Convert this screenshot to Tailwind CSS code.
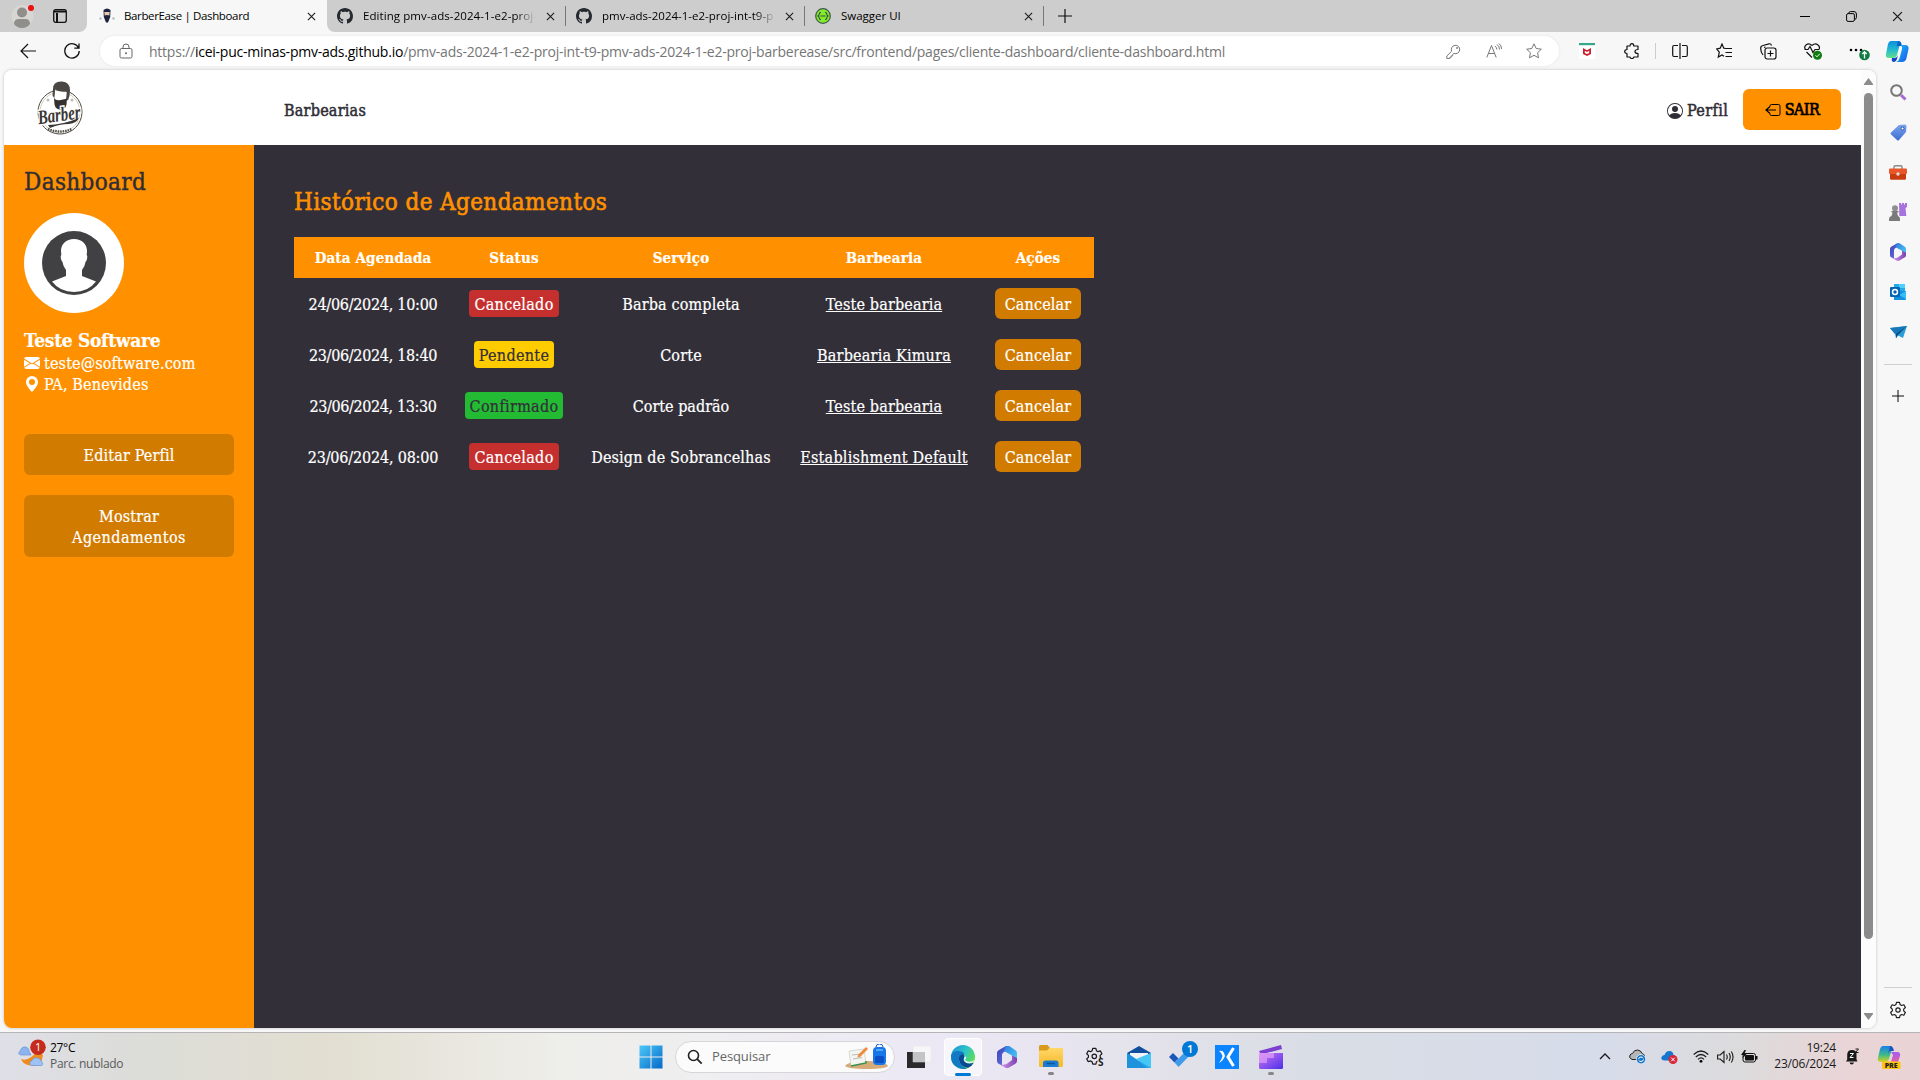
<!DOCTYPE html>
<html lang="pt-BR">
<head>
<meta charset="utf-8">
<title>BarberEase | Dashboard</title>
<script src="https://cdn.jsdelivr.net/npm/@tailwindcss/browser@4"></script>
</head>
<body class="w-[1920px] h-[1080px] overflow-hidden bg-[#f7f7f7] text-black font-['Open_Sans','Noto_Sans',sans-serif]">

<svg class="absolute size-0">
  <defs>
    <linearGradient id="gBlue" x1="0" y1="0" x2="1" y2="1"><stop offset="0" stop-color="#4cc8f8"/><stop offset="1" stop-color="#0569c8"/></linearGradient>
    <linearGradient id="gM1" x1="0" y1="0" x2="1" y2="1"><stop offset="0" stop-color="#3a3fb8"/><stop offset="1" stop-color="#6f7de8"/></linearGradient>
    <linearGradient id="gM2" x1="0" y1="0" x2="1" y2="1"><stop offset="0" stop-color="#2c7de0"/><stop offset="1" stop-color="#4fd0f5"/></linearGradient>
    <linearGradient id="gM3" x1="0" y1="0" x2="1" y2="0"><stop offset="0" stop-color="#d59af0"/><stop offset="1" stop-color="#7a3fb0"/></linearGradient>
    <linearGradient id="gEdge" x1="0" y1="0" x2="1" y2=".6"><stop offset="0" stop-color="#1b8fd8"/><stop offset=".55" stop-color="#2fc3c9"/><stop offset="1" stop-color="#5fe04a"/></linearGradient>
    <linearGradient id="gCopA" x1="0" y1="0" x2="0" y2="1"><stop offset="0" stop-color="#0a8fe0"/><stop offset=".5" stop-color="#22b8d0"/><stop offset="1" stop-color="#62e08c"/></linearGradient>
    <linearGradient id="gCopB" x1="0" y1="0" x2="1" y2="1"><stop offset="0" stop-color="#1bc0f5"/><stop offset="1" stop-color="#1557e8"/></linearGradient>
    <linearGradient id="gPreA" x1="0" y1="0" x2="0" y2="1"><stop offset="0" stop-color="#1a7fe8"/><stop offset=".55" stop-color="#3cba8a"/><stop offset="1" stop-color="#d8d020"/></linearGradient>
    <linearGradient id="gPreB" x1="0" y1="0" x2="0" y2="1"><stop offset="0" stop-color="#a45cf0"/><stop offset="1" stop-color="#f5628c"/></linearGradient>
    <linearGradient id="gClip" x1="0" y1="0" x2="1" y2="1"><stop offset="0" stop-color="#d07af5"/><stop offset="1" stop-color="#4a2fe8"/></linearGradient>
    <linearGradient id="gFold" x1="0" y1="0" x2="0" y2="1"><stop offset="0" stop-color="#ffd868"/><stop offset="1" stop-color="#f5b82a"/></linearGradient>
    <linearGradient id="gTag" x1="0" y1="0" x2="0" y2="1"><stop offset="0" stop-color="#7aa4ee"/><stop offset="1" stop-color="#3f6fd0"/></linearGradient>
  </defs>
  <symbol id="github" viewBox="0 0 16 16"><path fill="#24292f" d="M8 0C3.58 0 0 3.58 0 8c0 3.54 2.29 6.53 5.47 7.59.4.07.55-.17.55-.38 0-.19-.01-.82-.01-1.49-2.01.37-2.53-.49-2.69-.94-.09-.23-.48-.94-.82-1.13-.28-.15-.68-.52-.01-.53.63-.01 1.08.58 1.23.82.72 1.21 1.87.87 2.33.66.07-.52.28-.87.51-1.07-1.78-.2-3.64-.89-3.64-3.95 0-.87.31-1.59.82-2.15-.08-.2-.36-1.02.08-2.12 0 0 .67-.21 2.2.82.64-.18 1.32-.27 2-.27s1.36.09 2 .27c1.53-1.04 2.2-.82 2.2-.82.44 1.1.16 1.92.08 2.12.51.56.82 1.27.82 2.15 0 3.07-1.87 3.75-3.65 3.95.29.25.54.73.54 1.48 0 1.07-.01 1.93-.01 2.2 0 .21.15.46.55.38A8.01 8.01 0 0 0 16 8c0-4.42-3.58-8-8-8"/></symbol>
  <symbol id="close" viewBox="0 0 10 10"><path d="M1 1l8 8M9 1l-8 8" stroke="#1a1a1a" stroke-width="1.2" fill="none"/></symbol>
  <symbol id="plus" viewBox="0 0 14 14"><path d="M7 0v14M0 7h14" stroke="#111" stroke-width="1.2"/></symbol>
  <symbol id="m365" viewBox="0 0 20 22"><path d="M9 0L2 4Q0 5.200 0 7v8q0 2 2 3l3 1.500V9q0-2 2-3l5-3Q12 0 9 0z" fill="url(#gM1)"/><path d="M9 0q2-.6 4 .6l5 3.400q2 1.200 2 3v8l-5-3V9.500L7 5z" fill="url(#gM2)"/><path d="M20 12v3q0 2-2 3l-6 3.500q-2 1-4 0l-5-3q6 1 8-1.500l4-3V9.500z" fill="url(#gM3)"/></symbol>
  <symbol id="gear" viewBox="0 0 20 20"><path d="M8.300 1.500h3.400l.6 2.500 1.700 1 2.500-.8 1.700 3-1.900 1.800v2l1.900 1.800-1.700 3-2.500-.8-1.700 1-.6 2.500H8.300l-.6-2.500-1.700-1-2.500.8-1.700-3L3.700 11V9L1.800 7.200l1.700-3L6 5l1.700-1z" fill="none" stroke="#1c1c1c" stroke-width="1.300" stroke-linejoin="round"/><circle cx="10" cy="10" r="2.400" fill="none" stroke="#1c1c1c" stroke-width="1.300"/></symbol>
  <symbol id="copilot" viewBox="0 0 24 22"><path d="M6 1h7q3 0 2 3l-3 11q-.8 3-4 3H4q-4 0-3-4L3 4q.8-3 3-3z" fill="url(#gCopA)"/><path d="M13 1q3 0 3.500 3L17 6h-5l-1 3z" fill="#0b62c4"/><path d="M16 5h4q4 0 3.500 4l-2 9q-.8 4-4.500 4h-6q3-1 3.600-4L17 9q.5-2-1-4z" fill="url(#gCopB)"/><path d="M7 18h3q2 0 3-3l-1 4q-1 3-3 3-3 0-2-4z" fill="#1442c8"/></symbol>
</svg>

<!-- Tab strip -->
<div class="flex h-8 w-full bg-[#f7f7f7] text-[11.5px]">
  <div class="flex h-8 w-[87px] items-center rounded-br-lg bg-[#cdcdcd]">
    <svg class="ml-[10px] size-[26px]" viewBox="0 0 26 26"><circle cx="12.500" cy="13" r="11" fill="#d8d6d2"/><circle cx="12" cy="9.500" r="5" fill="#908e8a"/><path d="M4 21q0-5 5-5h6q5 0 5 5-3 4-8 4t-8-4z" fill="#908e8a"/><circle cx="21" cy="5" r="3" fill="#e81010"/></svg>
    <svg class="ml-[17px] size-[14px]" viewBox="0 0 14 14"><rect x=".7" y=".7" width="12.600" height="12.600" rx="2" fill="none" stroke="#111" stroke-width="1.300"/><path d="M1 2.500h12M4 4v9" stroke="#111" stroke-width="2"/></svg>
  </div>
  <div class="flex h-8 w-[240px] items-center rounded-t-lg bg-[#f7f7f7]">
    <svg class="ml-3 size-4" viewBox="0 0 16 16"><path d="M4.500 2q3.500-3 7 0l-.3 7L9 14.500H7L4.800 9z" fill="#1e2440"/><path d="M5.300 4h5.400l-.4 3.500q-2.300-1-4.600 0z" fill="#e8c8b0"/><circle cx="1.500" cy="10.500" r="1.200" fill="#bbb"/><circle cx="14.500" cy="10.500" r="1.200" fill="#bbb"/></svg>
    <span class="ml-[9px] w-[183px] whitespace-nowrap tracking-[-0.36px]">BarberEase | Dashboard</span>
    <svg class="size-[9px]"><use href="#close"/></svg>
  </div>
  <div class="flex h-8 flex-1 items-center rounded-bl-lg bg-[#cdcdcd]">
    <svg class="ml-[10px] size-4"><use href="#github"/></svg>
    <span class="ml-[10px] w-[173px] overflow-hidden whitespace-nowrap tracking-[0.08px] [mask-image:linear-gradient(to_right,black_88%,transparent)]">Editing pmv-ads-2024-1-e2-proj-</span>
    <svg class="ml-[10px] size-[9px]"><use href="#close"/></svg>
    <div class="ml-[10px] h-5 w-px bg-[#777]"></div>
    <svg class="ml-[10px] size-4"><use href="#github"/></svg>
    <span class="ml-[10px] w-[174px] overflow-hidden whitespace-nowrap [mask-image:linear-gradient(to_right,black_88%,transparent)]">pmv-ads-2024-1-e2-proj-int-t9-p</span>
    <svg class="ml-[9px] size-[9px]"><use href="#close"/></svg>
    <div class="ml-[10px] h-5 w-px bg-[#777]"></div>
    <svg class="ml-[10px] size-4" viewBox="0 0 16 16"><circle cx="8" cy="8" r="7.300" fill="#85ea2d" stroke="#3c5a4a" stroke-width="1.200"/><path d="M6 4.500q-1.800 0-1.800 1.500t-1.200 2q1.200.5 1.200 2T6 11.500M10 4.500q1.800 0 1.800 1.500T13 8q-1.200.5-1.200 2t-1.800 1.500M5.500 8h5" fill="none" stroke="#2f4a3a" stroke-width="1.100"/></svg>
    <span class="ml-[10px] w-[183px] whitespace-nowrap">Swagger UI</span>
    <svg class="size-[9px]"><use href="#close"/></svg>
    <div class="ml-[10px] h-5 w-px bg-[#777]"></div>
    <svg class="ml-[14px] size-[14px]"><use href="#plus"/></svg>
    <div class="ml-auto flex items-center">
      <div class="flex w-[46px] justify-center"><div class="h-px w-[10px] bg-black"></div></div>
      <div class="flex w-[46px] justify-center"><svg class="size-[11px]" viewBox="0 0 11 11"><rect x=".6" y="2.600" width="7.800" height="7.800" rx="1.500" fill="none" stroke="#000"/><path d="M2.800 2.300V2Q3 .6 4.500.6H8q2.400 0 2.400 2.400v3.500Q10.400 8 9 8.300" fill="none" stroke="#000"/></svg></div>
      <div class="flex w-[46px] justify-center"><svg class="size-[11px]"><use href="#close"/></svg></div>
    </div>
  </div>
</div>

<!-- Address bar and browser tools -->
<div class="flex h-[38px] w-full items-center">
  <svg class="ml-5 size-4" viewBox="0 0 16 16"><path d="M16 8H1M8 1L1 8l7 7" fill="none" stroke="#111" stroke-width="1.200"/></svg>
  <svg class="ml-7 size-4" viewBox="0 0 16 16"><path d="M14.600 5A7.200 7.200 0 1 0 15.200 8M15 .5V5.200h-4.700" fill="none" stroke="#111" stroke-width="1.300"/></svg>
  <div class="ml-5 flex h-[30px] w-[1459px] items-center rounded-full bg-white shadow-[0_0_3px_#e4e4e4]">
    <svg class="ml-[19px] h-4 w-[14px]" viewBox="0 0 14 16"><rect x="1" y="5.500" width="12" height="9.500" rx="1.500" fill="none" stroke="#666"/><path d="M4 5.500V4q0-3 3-3t3 3v1.500" fill="none" stroke="#666"/><circle cx="7" cy="10.300" r="1" fill="#666"/></svg>
    <p class="ml-4 w-[1297px] whitespace-nowrap text-[14px] tracking-[-0.235px] text-[#767676]">https://<span class="text-black">icei-puc-minas-pmv-ads.github.io</span>/pmv-ads-2024-1-e2-proj-int-t9-pmv-ads-2024-1-e2-proj-barberease/src/frontend/pages/cliente-dashboard/cliente-dashboard.html</p>
    <svg class="size-[15px]" viewBox="0 0 15 15"><path d="M5.700 7.200A4.200 4.200 0 1 1 8 9.400L6.700 10.500v1.300H5.300v1.300H4v1.300H.8V12z" fill="none" stroke="#777"/><circle cx="11" cy="4" r=".9" fill="#777"/></svg>
    <svg class="ml-[25px] size-4" viewBox="0 0 16 16"><path d="M.8 14.500L5.500 2.500l4.700 12M2.500 10.500h6M9 3q1.800 1.300 1.800 3.500M11 1.500q2.500 1.800 2.500 5M13 .5q2.600 2 2.600 5.500" fill="none" stroke="#777"/></svg>
    <svg class="ml-6 size-4" viewBox="0 0 16 16"><path d="M8 .8l2.200 4.700 5.100.7-3.700 3.500.9 5.100L8 12.300l-4.500 2.500.9-5.100L.7 6.200l5.100-.7z" fill="none" stroke="#777"/></svg>
  </div>
  <div class="ml-[5px] flex items-center">
    <div class="flex w-[46px] justify-center"><svg class="h-4 w-4" viewBox="0 0 16 16"><path fill="#fff" d="M0 0h16v16H0z"/><path fill="#36a88a" d="M0 0h16v2.200H0z"/><path d="M4 5l4 2.200L12 5v6l-4 2-4-2zM5.800 7.700v2.200L8 11l2.200-1.100V7.700L8 9z" fill="#c8202c" fill-rule="evenodd"/></svg></div>
    <div class="flex w-[43px] justify-center"><svg class="size-4" viewBox="0 0 16 16"><path d="M3 3h3q0-2.300 1.900-2.300T9.800 3H14v3.500q-3 0-3 2t3 2V14H9.800q0 1.500-1.900 1.500T6 14H3v-3.500Q.7 10.300.7 8.500T3 6.500z" fill="none" stroke="#111" stroke-width="1.200" stroke-linejoin="round"/></svg></div>
    <div class="ml-[2px] h-4 w-px bg-[#ccc]"></div>
    <div class="ml-[2px] flex w-[44px] justify-center"><svg class="size-4" viewBox="0 0 16 16"><path d="M6 2.500H2Q.7 2.500.7 4v8q0 1.500 1.300 1.500h4M10 2.500h4q1.300 0 1.300 1.500v8q0 1.500-1.300 1.500h-4M8 0v16" fill="none" stroke="#111" stroke-width="1.200"/></svg></div>
    <div class="flex w-[44px] justify-center"><svg class="size-4" viewBox="0 0 16 16"><path d="M9.500 5.500L7.800 5.200 6 1 4.200 5.200.7 6l2.600 3.200L2.300 14 6 12l2 1.200M9.500 5.500h6.500M9.500 9.500H16M9.500 13.500H16" fill="none" stroke="#111" stroke-width="1.200"/></svg></div>
    <div class="flex w-[44px] justify-center"><svg class="size-[17px]" viewBox="0 0 17 17"><path d="M3 12Q.7 9 .7 5.500.5 3 3 2.500L9 .8Q11 .5 11.500 2.500M4 4.500L5.500 4" fill="none" stroke="#111" stroke-width="1.200"/><rect x="5" y="5" width="11" height="11" rx="2.200" fill="none" stroke="#111" stroke-width="1.200"/><path d="M10.500 7.500v6M7.500 10.500h6" stroke="#111" stroke-width="1.200"/></svg></div>
    <div class="flex w-[45px] justify-center"><svg class="h-[17px] w-[18px]" viewBox="0 0 18 17"><path d="M8 2.500Q5-.2 2.300 1.700T1.500 6.500M8 2.500q3-2.700 5.700-.8T15 6.500M.5 6.500H4l2-3 3 6 2-3h4M2.500 9L8 14.500" fill="none" stroke="#111" stroke-width="1.200"/><circle cx="13.500" cy="12.200" r="4.500" fill="#107c10"/><path d="M11.500 12.300l1.500 1.500 2.700-3" stroke="#fff" fill="none"/></svg></div>
    <div class="flex w-[45px] justify-center"><svg class="ml-[4px] h-5 w-[22px]" viewBox="0 0 22 20"><circle cx="2" cy="9" r="1.300"/><circle cx="7" cy="9" r="1.300"/><circle cx="12" cy="9" r="1.300"/><circle cx="15.500" cy="14" r="5.300" fill="#107c41"/><path d="M15.500 17.500v-6M13.300 13l2.200-2.300 2.200 2.300" stroke="#fff" stroke-width="1.300" fill="none"/></svg></div>
    <svg class="ml-[5px] h-[22px] w-6"><use href="#copilot"/></svg>
  </div>
</div>

<!-- Page area and browser sidebar -->
<div class="flex h-[962px] w-full pl-1">
  <div class="flex h-[958px] w-[1872px] overflow-hidden rounded-lg bg-white shadow-[0_0_3px_#bbb] font-['Roboto_Slab','DejaVu_Serif_Condensed','DejaVu_Serif',serif] text-base tracking-[0.15px] [-webkit-text-stroke:0.2px]">
    <div class="w-[1857px]">
      <header class="flex h-[75px] items-center bg-white text-[#2f2d36]">
        <svg class="ml-[28px] h-[56px] w-[60px] overflow-visible" viewBox="-2 0 60 56"><circle cx="26" cy="32" r="22" fill="#fff" stroke="#4a4843" stroke-width="1"/><circle cx="26" cy="32" r="20" fill="none" stroke="#c9c2a6" stroke-width=".8"/><path d="M19 9q0-8 9-7.500 8 .5 8 9 0 5-2 10l-2-1 .5-8q-6 1-11-2l-1 9-2-3z" fill="#4a4744"/><path d="M21 10q6 3 11.500 2L32 20H20.500z" fill="#fff"/><path d="M20 18q2 3 6.500 2t6.500-1.500l-.5 6q-1 5-6 5t-6-5z" fill="#34312e"/><circle cx="14" cy="20" r="1.500" fill="#bbb"/><circle cx="38" cy="20" r="1.500" fill="#bbb"/><g class="[-webkit-text-stroke:0]"><text x="4" y="41" transform="rotate(-8 27 38)" textLength="43" lengthAdjust="spacingAndGlyphs" font-family="Liberation Serif" font-style="italic" font-weight="700" font-size="20" letter-spacing="0" fill="none" stroke="#fff" stroke-width="3" aria-hidden="true">Barber</text></g><text x="4" y="41" transform="rotate(-8 27 38)" textLength="43" lengthAdjust="spacingAndGlyphs" font-family="Liberation Serif" font-style="italic" font-weight="700" font-size="20" letter-spacing="0" fill="#393633">Barber</text><path d="M14 45q14 0 31-7-2 5-10 6-10 0-19 4z" fill="#393633"/><path d="M14 49q12 5 24 0" fill="none" stroke="#55524c" stroke-width="2.500" stroke-dasharray="1.500 1"/></svg>
        <a class="ml-[192px] mt-[7px] tracking-[0.22px] [-webkit-text-stroke:0.5px]">Barbearias</a>
        <a class="ml-auto mt-[6px] flex items-center gap-1">
          <svg class="size-4" viewBox="0 0 16 16" fill="currentColor"><path d="M11 6a3 3 0 1 1-6 0 3 3 0 0 1 6 0"/><path fill-rule="evenodd" d="M0 8a8 8 0 1 1 16 0A8 8 0 0 1 0 8m8-7a7 7 0 0 0-5.468 11.370C3.242 11.226 4.805 10 8 10s4.757 1.225 5.468 2.370A7 7 0 0 0 8 1"/></svg>
          <span class="w-[42px] tracking-[0.4px] [-webkit-text-stroke:0.5px]">Perfil</span>
        </a>
        <a class="ml-[14px] mr-5 mt-[3px] flex h-[41px] w-[98px] items-center justify-center gap-1 rounded-md bg-[#ff9100] pt-px text-black">
          <svg class="size-4" viewBox="0 0 16 16" fill="none" stroke="currentColor"><path d="M5 4.500V4q0-1.500 1.500-1.500h7Q15 2.500 15 4v8q0 1.500-1.500 1.500h-7Q5 13.500 5 12v-.5"/><path d="M11 8H1M5 4.500L1 8l4 3.500" stroke-width="1.200"/></svg>
          <span class="tracking-[-0.55px] [-webkit-text-stroke:0.7px]">SAIR</span>
        </a>
      </header>
      <div class="flex h-[883px]">
        <aside class="w-[250px] bg-[#ff9100] px-5 pt-[19px] text-white">
          <h2 class="h-[36px] text-[24px] leading-[36px] tracking-[0.35px] text-[#2f2d36] [-webkit-text-stroke:0.4px]">Dashboard</h2>
          <svg class="mt-[13px] size-[100px]" viewBox="0 0 100 100"><circle cx="50" cy="50" r="50" fill="#fff"/><circle cx="50" cy="50" r="32" fill="#414042"/><path d="M50 26c8 0 13 5 13 12l-.3 4q1 1 .3 4-.5 2-1.300 2.500Q61 53 58 57v6l14 5.500Q64 79 50 79T28 68.500L42 63v-6q-3-4-3.700-8.500Q37.500 48 37 46q-.7-3 .3-4L37 38c0-7 5-12 13-12z" fill="#fff"/></svg>
          <p class="mt-[13px] h-[28px] whitespace-nowrap text-[19px] font-bold leading-[28px] tracking-[-0.3px]">Teste Software</p>
          <p class="mt-[-2px] flex h-[21px] items-center gap-1"><svg class="size-4" viewBox="0 0 16 16" fill="currentColor"><path d="M.05 3.555A2 2 0 0 1 2 2h12a2 2 0 0 1 1.950 1.555L8 8.414zM0 4.697v7.104l5.803-3.558zM6.761 8.830l-6.570 4.027A2 2 0 0 0 2 14h12a2 2 0 0 0 1.808-1.144l-6.570-4.027L8 9.586zm3.436-.586L16 11.801V4.697z"/></svg><span class="pt-[2px]">teste@software.com</span></p>
          <p class="flex h-[21px] items-center gap-1"><svg class="size-4" viewBox="0 0 16 16" fill="currentColor"><path d="M8 16s6-5.686 6-10A6 6 0 0 0 2 6c0 4.314 6 10 6 10m0-7a3 3 0 1 1 0-6 3 3 0 0 1 0 6"/></svg><span class="pt-[2px]">PA, Benevides</span></p>
          <a class="mt-[40px] flex h-[41px] items-center justify-center rounded-md bg-[#d17b00] pt-[2px]">Editar Perfil</a>
          <a class="mt-[20px] flex h-[62px] flex-col items-center justify-center rounded-md bg-[#d17b00] pt-[2px] text-center leading-[21px]"><span>Mostrar</span><span class="tracking-[0.45px]">Agendamentos</span></a>
        </aside>
        <main class="w-[1607px] bg-[#322f38] pl-10 pt-[38px] text-white">
          <h1 class="h-[37px] whitespace-nowrap text-[24px] leading-[38px] tracking-[0.38px] text-[#ff9100] [-webkit-text-stroke:0.6px]">Histórico de Agendamentos</h1>
          <table class="mt-[17px] w-[800px] table-fixed text-center">
            <colgroup><col class="w-[158px]"><col class="w-[124px]"><col class="w-[210px]"><col class="w-[196px]"><col class="w-[112px]"></colgroup>
            <thead><tr class="h-[41px] bg-[#ff9100] text-[15px] font-bold [&>th]:pt-[2px]"><th>Data Agendada</th><th>Status</th><th>Serviço</th><th>Barbearia</th><th>Ações</th></tr></thead>
            <tbody class="[&_td:nth-child(1)]:pt-[2px] [&_td:nth-child(3)]:pt-[2px] [&_td:nth-child(4)]:pt-[2px]">
              <tr class="h-[51px]"><td class="tracking-[-0.28px]">24/06/2024, 10:00</td><td><span class="inline-block h-[27px] rounded bg-[#c5302f] px-[5px] align-middle leading-[29px] tracking-[0.3px]">Cancelado</span></td><td>Barba completa</td><td><a class="underline">Teste barbearia</a></td><td><span class="inline-block h-[31px] w-[86px] rounded-md bg-[#d17b00] align-middle leading-[33px]">Cancelar</span></td></tr>
              <tr class="h-[51px]"><td class="tracking-[-0.32px]">23/06/2024, 18:40</td><td><span class="inline-block h-[27px] rounded bg-[#ffcc00] px-[5px] align-middle leading-[29px] tracking-[0.3px] text-[#322f38]">Pendente</span></td><td>Corte</td><td><a class="underline tracking-[0.2px]">Barbearia Kimura</a></td><td><span class="inline-block h-[31px] w-[86px] rounded-md bg-[#d17b00] align-middle leading-[33px]">Cancelar</span></td></tr>
              <tr class="h-[51px]"><td class="tracking-[-0.38px]">23/06/2024, 13:30</td><td><span class="inline-block h-[27px] rounded bg-[#22bb33] px-[5px] align-middle leading-[29px] tracking-[0.3px] text-[#322f38]">Confirmado</span></td><td class="tracking-normal">Corte padrão</td><td><a class="underline">Teste barbearia</a></td><td><span class="inline-block h-[31px] w-[86px] rounded-md bg-[#d17b00] align-middle leading-[33px]">Cancelar</span></td></tr>
              <tr class="h-[51px]"><td class="tracking-[-0.18px]">23/06/2024, 08:00</td><td><span class="inline-block h-[27px] rounded bg-[#c5302f] px-[5px] align-middle leading-[29px] tracking-[0.3px]">Cancelado</span></td><td>Design de Sobrancelhas</td><td><a class="underline tracking-[0.23px]">Establishment Default</a></td><td><span class="inline-block h-[31px] w-[86px] rounded-md bg-[#d17b00] align-middle leading-[33px]">Cancelar</span></td></tr>
            </tbody>
          </table>
        </main>
      </div>
    </div>
    <!-- Scrollbar -->
    <div class="flex w-[15px] flex-col items-center bg-[#fcfcfc] pt-2">
      <svg class="h-[7px] w-[9px]" viewBox="0 0 9 7"><path d="M4.500 0L9 6v1H0V6z" fill="#8b8b8b"/></svg>
      <div class="mt-2 h-[846px] w-[9px] rounded-full bg-[#8b8b8b]"></div>
      <svg class="mt-[74px] h-[7px] w-[9px]" viewBox="0 0 9 7"><path d="M4.500 7L9 1V0H0v1z" fill="#8b8b8b"/></svg>
    </div>
  </div>

  <div class="flex w-[44px] flex-col items-center pt-[2px]">
    <div class="flex h-10 items-center"><svg class="size-[17px]" viewBox="0 0 17 17"><path d="M11 11l4.500 4.500" stroke="#a868d8" stroke-width="3"/><circle cx="6.500" cy="6.500" r="5.300" fill="none" stroke="#767676" stroke-width="2"/></svg></div>
    <div class="flex h-10 items-center"><svg class="size-[17px]" viewBox="0 0 17 17"><path d="M9 1l6-.5q1.500 0 1.500 1.500L16 8l-7 8q-1 1-2 0L1 10.500q-1-1 0-2z" fill="url(#gTag)"/><circle cx="12.500" cy="4.500" r="1.500" fill="#fff" stroke="#2c4f9e"/></svg></div>
    <div class="flex h-10 items-center"><svg class="h-[15px] w-[18px]" viewBox="0 0 18 15"><path d="M5 4V2q0-1.300 1.300-1.300h5.400Q13 .7 13 2v2" fill="none" stroke="#8a8a8a" stroke-width="1.400"/><rect x="0" y="3.500" width="18" height="5.500" rx="1" fill="#e8562a"/><path d="M1 9h16v4.500q0 1.200-1.200 1.200H2.200Q1 14.700 1 13.500z" fill="#c83c10"/><circle cx="9" cy="9" r="1.700" fill="#ddd"/></svg></div>
    <div class="flex h-10 items-center"><svg class="h-[18px] w-[18px]" viewBox="0 0 18 18"><path d="M10 0h2v1.500h1V0h2v1.500h1V0h2v4l-1.500 1 .8 8h-7z" fill="#a673dc"/><circle cx="6" cy="5.300" r="3" fill="#8f8f8f"/><path d="M2.500 8h7v1.500H8L9 13q2 .5 2 3v2H0v-2q0-2.500 2.500-3l1.200-3.500H2.500z" fill="#7a7a7a"/></svg></div>
    <div class="flex h-10 items-center"><svg class="h-[18px] w-4"><use href="#m365"/></svg></div>
    <div class="flex h-10 items-center"><svg class="size-4" viewBox="0 0 16 16"><path d="M4 0h11v8H4z" fill="#28a8ea"/><path d="M9 0h6v4H9z" fill="#50d0ff"/><path d="M4 7h12v8q0 1-1 1H4z" fill="#1490df"/><path d="M16 7v8l-7-4z" fill="#35bdf5"/><rect y="3" width="10" height="10" rx="1" fill="#0364b8"/><circle cx="5" cy="8" r="2.500" fill="none" stroke="#fff" stroke-width="1.500"/></svg></div>
    <div class="flex h-10 items-center"><svg class="h-[13px] w-[17px]" viewBox="0 0 17 13"><path d="M0 2L17 0l-4 12-5-2.500-2 3L5 8z" fill="#2a9fd8"/><path d="M0 2L17 0 5 8z" fill="#1678b8"/><path d="M17 0L6 7.500V12l2-3z" fill="#0c4f86"/></svg></div>
    <div class="mt-3 h-px w-7 bg-[#cfcfcf]"></div>
    <svg class="mt-[25px] size-3"><use href="#plus"/></svg>
    <div class="mt-[585px] h-px w-7 bg-[#cfcfcf]"></div>
    <svg class="mt-[13px] size-[18px]"><use href="#gear"/></svg>
  </div>
</div>

<!-- Taskbar -->
<div class="flex h-12 w-full items-center border-t border-[#b5b5b8] bg-[linear-gradient(90deg,#dfdfe8_0px,#dcddd9_130px,#e2ded1_330px,#eeeeea_560px,#efeef0_700px,#ebe8f5_950px,#e4e2ea_1150px,#d9dde5_1310px,#d7dcea_1600px,#dcdbdc_1740px,#e9d4d6_1850px,#e9d3d5_1920px)]">
  <svg class="mb-[3px] ml-[18px] h-7 w-[30px] overflow-visible" viewBox="0 0 30 28"><path d="M3 18q8 3 16-8l6 4-2 9q-5 3-13 1-5-1-7-6z" fill="#f08c1e"/><path d="M3 14q-4-1-1-4 2-5 6-4 3 1 3 4l2 4z" fill="#8db4ee" stroke="#5f8fda" stroke-width=".6"/><path d="M13 24.500q-3-3 1-5 2-4 6-2.500 3 1 3 3 3 2 1 4.500z" fill="#9ec2f5" stroke="#5f8fda" stroke-width=".6"/><circle cx="20" cy="6.300" r="7.800" fill="#c42b1c"/><text x="17" y="10.300" font-family="Open Sans" font-size="11" fill="#fff">1</text></svg>
  <div class="mb-px ml-[2px] w-[588px] text-[12px] leading-4 tracking-[-0.3px]"><p>27°C</p><p class="text-[#5a5a5a]">Parc. nublado</p></div>
  <svg class="ml-px size-[24px]" viewBox="0 0 24 24"><path d="M.5.500h11v11H.5zM12.500.500h11v11h-11zM.5 12.500h11v11H.5zM12.500 12.500h11v11h-11z" fill="url(#gBlue)"/></svg>
  <div class="ml-3 flex h-8 w-[220px] items-center rounded-full border border-[#d6d6d8] bg-[#fbfbfb] pl-[11px] pr-[5px]">
    <svg class="size-4" viewBox="0 0 16 16"><circle cx="6.500" cy="6.500" r="5" fill="none" stroke="#222" stroke-width="1.600"/><path d="M10.200 10.200l4.500 4.500" stroke="#222" stroke-width="1.800"/></svg>
    <span class="ml-[9px] text-[13px] tracking-[-0.1px] text-[#666]">Pesquisar</span>
    <svg class="ml-auto h-[26px] w-[45px]" viewBox="0 0 45 26"><path d="M1 22q4-5 22-5t21 5q-2 3-21 3T1 22z" fill="#d5ab78"/><path d="M5 7l15-2 2 14-15 3z" fill="#f3f5f0" stroke="#bcc8bc" stroke-width=".6"/><path d="M7 22l15-3v-2" fill="none" stroke="#3a8f4a" stroke-width="1.500"/><path d="M8 11l9-1M9 15l9-1.500" stroke="#bbb"/><path d="M22 3l2 2-8 8-2.500.5.500-2.500z" fill="#f08a3c"/><rect x="29" y="3" width="13" height="18" rx="4" fill="#1877e8"/><path d="M32 3q0-3 3.500-3T39 3" fill="none" stroke="#1557c0"/><rect x="31" y="12" width="9" height="7" rx="1.500" fill="#0b4fc4"/><path d="M32 6h7" stroke="#63b8ff" stroke-width="1.500"/></svg>
  </div>
  <svg class="ml-3 h-[22px] w-6" viewBox="0 0 24 22"><path d="M0 6h18v16H0z" fill="#2a2a2a"/><path d="M6 0h18v16H6z" fill="#f6f6f6" stroke="#e0e0e0" stroke-width=".5"/><path d="M6 6h12v10H6z" fill="#c4c4c6"/></svg>
  <div class="ml-[13px] flex h-[38px] w-[38px] flex-col items-center rounded border border-white bg-white/60 pt-[6px]">
    <svg class="size-6 shrink-0" viewBox="0 0 24 24"><circle cx="12" cy="12" r="12" fill="url(#gEdge)"/><path d="M0 11q1-5 7-5 5 0 6.500 3-5-.5-5.500 5 0 7 8 9.500-5 1.500-10-1.500Q0 19 0 11z" fill="#1479c4"/><path d="M12 9q-4.500.5-4 5.500Q9 22 17 22.800q4-1.500 5.700-5-4 1.500-7.500 0-4-2-2-5.500Q13.500 9.500 12 9z" fill="#0b4a92"/><path d="M13.500 12q.5-1 1.500-.3 1 1.300-1 3.300 1.500 2 5 1.700 2.500-.2 4-1.700l-.5 2.500q-4 1.500-7.300.2-3.500-2-1.700-5.700z" fill="#e9f3f7"/></svg>
    <div class="mt-1 h-[3px] w-4 shrink-0 rounded-full bg-[#0078d4]"></div>
  </div>
  <div class="ml-[3px] flex items-center">
    <div class="flex w-11 justify-center"><svg class="h-[22px] w-5"><use href="#m365"/></svg></div>
    <div class="flex w-11 flex-col items-center pt-[7px]"><svg class="h-[22px] w-6" viewBox="0 0 24 22"><path d="M0 1.500Q0 0 1.500 0h7L11 3h11.500Q24 3 24 4.500V8H0z" fill="#d99a1c"/><path d="M0 5.500h8L10.500 3H24v17.500q0 1.500-1.500 1.500h-21Q0 22 0 20.500z" fill="url(#gFold)"/><path d="M4 22v-4q0-2.500 2.500-2.500h10.500q2.500 0 2.500 2.500v4z" fill="#1a7bd0"/><path d="M7.500 18.500h8.500" stroke="#0c549c" stroke-width="1.500"/></svg><div class="mt-[5px] h-[3px] w-[6px] rounded-full bg-[#868688]"></div></div>
    <div class="flex w-11 justify-center"><svg class="size-[20px]" viewBox="0 0 20 20"><g transform="scale(.93)"><use href="#gear" width="20" height="20"/></g><path d="M12.500 11h8v9h-8z" fill="#e6e4ee"/><text x="13" y="19" font-family="Open Sans" font-weight="700" font-size="10" fill="#222">S</text></svg></div>
    <div class="flex w-11 justify-center"><svg class="h-[22px] w-6" viewBox="0 0 24 22"><path d="M0 7L12 0l12 7v3H0z" fill="#0f4f9e"/><path d="M3 7h18v8H3z" fill="#f1f3f8"/><path d="M0 7l12 8L24 7v15H0z" fill="#2aa8ea"/><path d="M24 7v15L9 13z" fill="#45c8f5"/><path d="M0 7v15h20L9.500 13.400z" fill="#1e92dc"/></svg></div>
    <div class="flex w-11 justify-center"><svg class="mb-[4px] h-[28px] w-[30px]" viewBox="0 0 30 28"><path d="M1 16l4-4 5.500 5.500-4 4z" fill="#1b57b8"/><path d="M6.500 21.500L22 6l4 4-15.500 16z" fill="#3f9bec"/><circle cx="22" cy="8" r="8" fill="#0078d4"/><text x="19" y="12" font-family="Open Sans" font-weight="600" font-size="11" fill="#fff">1</text></svg></div>
    <div class="flex w-11 justify-center"><svg class="size-6" viewBox="0 0 24 24"><path d="M0 0h24v24H0z" fill="#0a84ff"/><path d="M4 6q4-1 5 2l1 3q-2 5-6 7 3-4 3.500-7Q7 8 4 6z" fill="#fff"/><path d="M18.500 3L13 12l5.500 9" fill="none" stroke="#fff" stroke-width="3"/></svg></div>
    <div class="flex w-11 flex-col items-center pt-[7px]"><svg class="h-6 w-6" viewBox="0 0 24 24"><path d="M0 6L22 0l1 4L2 9.500z" fill="#7c3fd0"/><path d="M0 8h24v14.500q0 1.500-1.500 1.500h-21Q0 24 0 22.500z" fill="url(#gClip)"/><path d="M0 8h15v5H8v5H0z" fill="#e3a0f8" opacity=".7"/></svg><div class="mt-[3px] h-[3px] w-[6px] rounded-full bg-[#868688]"></div></div>
  </div>
  <div class="ml-auto flex items-center">
    <svg class="h-[7px] w-3" viewBox="0 0 12 7"><path d="M1 6l5-5 5 5" fill="none" stroke="#1a1a1a" stroke-width="1.300"/></svg>
    <svg class="ml-[18px] h-[15px] w-[17px]" viewBox="0 0 17 15"><path d="M3 10.500Q-.5 9 1 6q1-1.500 2.500-1.500Q5 .8 8.500 1t4.500 3.500Q16 5 15.500 8.500L14 10.500z" fill="#b5b5b5" stroke="#222"/><circle cx="12" cy="10.200" r="4.700" fill="#1b78c8" stroke="#fff" stroke-width=".7"/><path d="M9.500 10q.5-2 2.500-2 1.500 0 2.300 1.200M14.500 10.500q-.5 2-2.500 2-1.500 0-2.300-1.200" fill="none" stroke="#fff"/></svg>
    <svg class="ml-[15px] h-[14px] w-[17px]" viewBox="0 0 17 14"><path d="M3 10.500Q-.5 10 .5 7 1.500 5 3.500 5 5 .8 8.500 1t4 4Q15 5.500 15 8.500v2z" fill="#1577cf"/><circle cx="12" cy="9.500" r="4.500" fill="#d6283a"/><path d="M10.200 7.700l3.600 3.600M13.800 7.700l-3.600 3.600" stroke="#fff"/></svg>
    <svg class="ml-[15px] h-[13px] w-4" viewBox="0 0 16 13"><path d="M.7 4.500q7.300-7 14.600 0M2.800 7q5.200-5 10.400 0M5 9.300q3-3 6 0" fill="none" stroke="#1a1a1a" stroke-width="1.200"/><circle cx="8" cy="11.300" r="1.400"/></svg>
    <svg class="ml-2 h-[14px] w-[17px]" viewBox="0 0 17 14"><path d="M.6 5h2.600L7 1.500v11L3.200 9H.6zM9.500 4.500q1.500 2.500 0 5M12 3q2.500 4 0 8M14.300 1.500q3.500 5.500 0 11" fill="none" stroke="#1a1a1a" stroke-width="1.100"/></svg>
    <svg class="ml-[7px] h-[13px] w-[17px]" viewBox="0 0 17 13"><rect x="2" y="3.500" width="12.500" height="8.500" rx="2" fill="none" stroke="#111"/><rect x="4" y="5" width="9" height="5.500" rx="1" fill="#111"/><path d="M15 6v3.500h1.500V6zM3.500 0L0 5h2.500L1.500 8.500 6 3.500H3.500L5 0z" fill="#111"/></svg>
    <div class="mb-px ml-[15px] w-[63px] text-right text-[12px] leading-4 tracking-[-0.2px] text-[#1a1a1a]"><p>19:24</p><p>23/06/2024</p></div>
    <svg class="ml-[9px] h-[17px] w-[15px]" viewBox="0 0 15 17"><path d="M1 13.500l1.200-2V7q0-5 4.800-5 4.500 0 4.500 4v5.500l1 2zM4.500 14.500h4.500q-.5 2-2.200 2t-2.300-2z" fill="#1a1a1a"/><path d="M5 5.500h3.500L5 9.500h3.500" fill="none" stroke="#fff"/><path d="M10.500 1h3l-3 3.500h3" fill="none" stroke="#1a1a1a"/></svg>
    <svg class="ml-[17px] mr-[19px] h-[24px] w-[24px]" viewBox="0 0 24 24"><path d="M6 1h7q3 0 2 3l-3 10q-1 3-4 3H4q-4 0-3-4L3 4q.8-3 3-3z" fill="url(#gPreA)"/><path d="M13 1q3 0 4 5h-4.500L11 9z" fill="#1a55c8"/><path d="M14 7h6q4 0 3 4l-2 6q-1 4-4 4h-6q2-1 3-4l2-7z" fill="url(#gPreB)"/><rect x="5" y="16.500" width="18.500" height="7.500" rx="1.500" fill="#ffc20e"/><text x="7.700" y="23" font-family="Open Sans" font-weight="800" font-size="7" fill="#222">PRE</text></svg>
  </div>
</div>
</body>
</html>
